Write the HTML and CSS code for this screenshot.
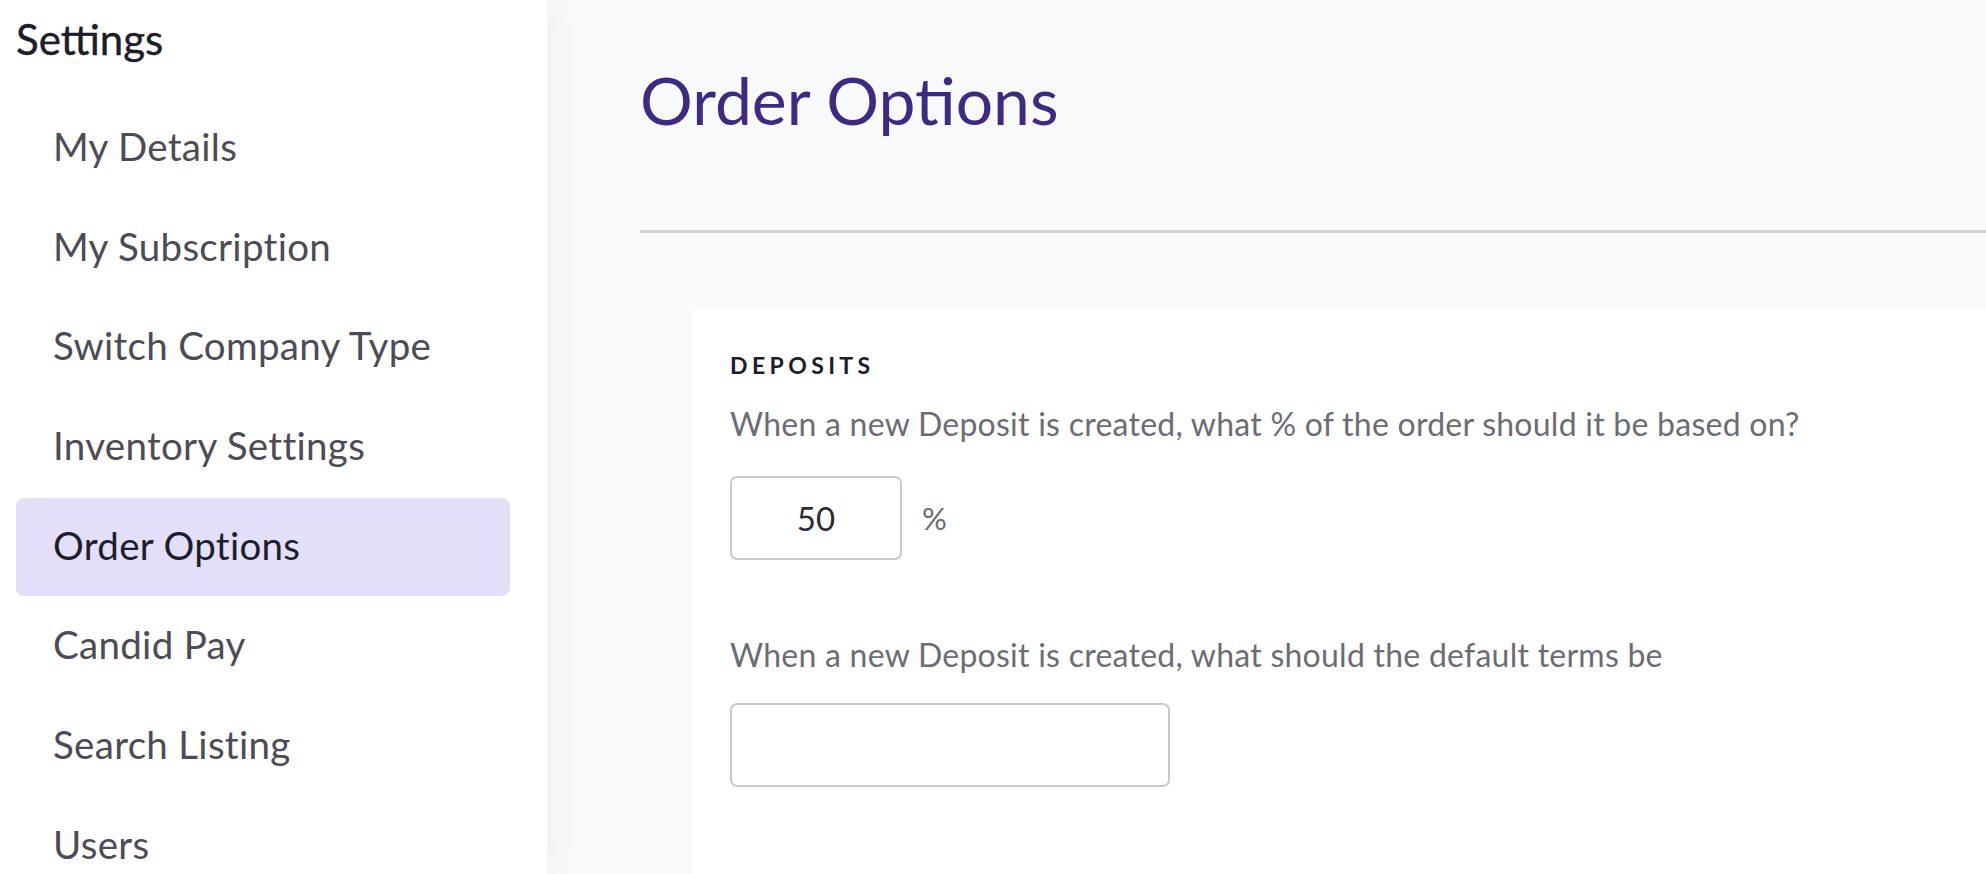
FILE: index.html
```html
<!DOCTYPE html>
<html>
  <head>
    <meta charset="UTF-8" />
    <meta name="viewport" content="width=device-width,initial-scale=1" />
    <title>Order Options</title>
    <link rel="stylesheet" href="styles.css">
  </head>
  <body>
    <div class="sidebar">
      <h2 class="sidebar-title">Settings</h2>
      <div class="nav">
        <a class="nav-item">My Details</a>
        <a class="nav-item">My Subscription</a>
        <a class="nav-item">Switch Company Type</a>
        <a class="nav-item">Inventory Settings</a>
        <a class="nav-item active">Order Options</a>
        <a class="nav-item">Candid Pay</a>
        <a class="nav-item">Search Listing</a>
        <a class="nav-item">Users</a>
      </div>
    </div>
    <div class="main">
      <div class="header">
        <h1>Order Options</h1>
      </div>
      <div class="card">
        <h3>Deposits</h3>
        <p class="question">When a new Deposit is created, what % of the order should it be based on?</p>
        <div class="percent-row">
          <input id="percent" class="percent" type="text" value="50" />
          <label for="percent">%</label>
        </div>
        <p class="question second">When a new Deposit is created, what should the default terms be</p>
        <input id="terms" class="terms" type="text" value="" />
      </div>
    </div>
  </body>
</html>
```
FILE: styles.css
```css
* {
  --text: #1d1d2b;
  --nav: #4d4b55;
  --grey: #6d6c74;
  --purple: #3e2a83;
  --lavender: #e4dff8;
  --line: #cdd3d8;
  --bg: #f8f9fb;
  box-sizing: border-box;
}
body {
  margin: 0;
  padding: 0;
  font-family: "Lato", sans-serif;
  display: flex;
  width: 100%;
  height: 100vh;
  overflow: hidden;
  background: var(--bg);
}
.sidebar {
  width: 547px;
  flex-shrink: 0;
  background: #fff;
  padding: 0 37px 0 16px;
  box-shadow: 6px 0 30px rgba(0, 0, 0, 0.035);
  position: relative;
  z-index: 1;
}
.sidebar-title {
  margin: 0;
  height: 99px;
  line-height: 78px;
  font-size: 42px;
  font-weight: 400;
  color: var(--text);
  -webkit-text-stroke: 0.4px var(--text);
}
.nav {
  display: flex;
  flex-direction: column;
  gap: 1.7px;
}
.nav-item {
  display: flex;
  align-items: center;
  height: 98px;
  padding: 0 0 4px 37px;
  border-radius: 8px;
  font-size: 38.5px;
  color: var(--nav);
  letter-spacing: 0.3px;
}
.nav-item.active {
  background: var(--lavender);
  color: var(--text);
}
.main {
  flex: 1;
  padding-left: 93px;
  min-width: 0;
}
.header {
  padding-top: 62px;
  border-bottom: 3px solid var(--line);
}
.header h1 {
  margin: 0 0 92px;
  font-size: 66px;
  line-height: 76px;
  font-weight: 400;
  color: var(--purple);
}
.card {
  margin: 76px 0 0 53px;
  background: #fff;
  padding: 42px 37px 200px;
  height: 100%;
}
.card h3 {
  margin: 0;
  font-size: 23px;
  line-height: 28px;
  font-weight: 700;
  letter-spacing: 4.4px;
  text-transform: uppercase;
  color: var(--text);
}
.question {
  margin: 26px 0 33px;
  font-size: 32px;
  line-height: 38px;
  color: var(--grey);
  letter-spacing: 0.25px;
}
.question.second {
  margin: 76px 0 29px;
}
.percent-row {
  display: flex;
  align-items: center;
  gap: 20px;
}
.percent-row label {
  font-size: 31px;
  color: var(--grey);
}
input {
  height: 84px;
  border: 2px solid #c9c9cc;
  border-radius: 7px;
  font-family: "Lato", sans-serif;
  background: #fff;
  outline: none;
}
input.percent {
  width: 172px;
  font-size: 33px;
  text-align: center;
  color: #2b2b33;
}
input.terms {
  width: 440px;
  display: block;
}
```
